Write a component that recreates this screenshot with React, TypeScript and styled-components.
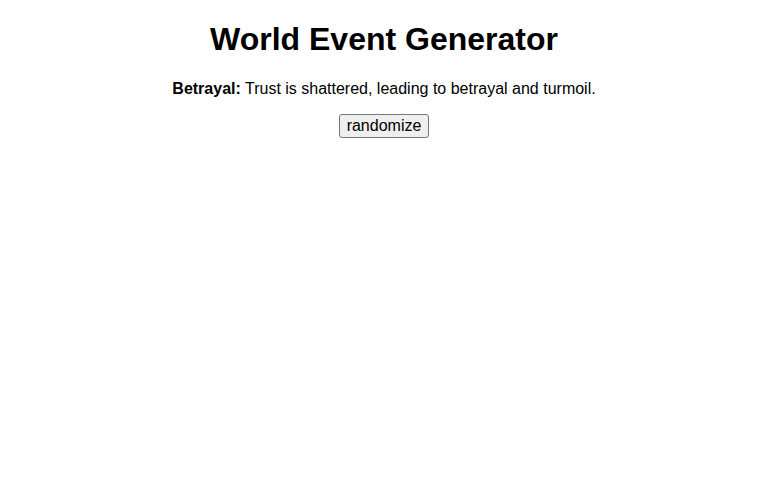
import React, { useState } from 'react'
import styled, { createGlobalStyle } from 'styled-components'

const GlobalStyle = createGlobalStyle`
  body {
    margin: 0;
    background: #fff;
    color: #000;
    font-family: "Liberation Sans", Arial, sans-serif;
  }
`

const Page = styled.div`
  text-align: center;
`

const Title = styled.h1`
  font-size: 32px;
  font-weight: bold;
  margin: 21.44px 0;
`

const EventLine = styled.p`
  font-size: 16px;
  margin: 16px 0;
`

const RandomButton = styled.button`
  font: inherit;
  font-size: 16px;
  color: #000;
  background: #efefef;
  border: 1px solid #767676;
  border-radius: 3px;
  padding: 2px 7px;
  cursor: pointer;

  &:hover {
    background: #e5e5e5;
  }
`

const events = [
  { name: 'Betrayal', text: 'Trust is shattered, leading to betrayal and turmoil.' },
  { name: 'Plague', text: 'A deadly sickness spreads from town to town.' },
  { name: 'Festival', text: 'The realm gathers to celebrate a bountiful harvest.' },
  { name: 'War', text: 'Neighbouring kingdoms clash over disputed borders.' },
]

export default function App() {
  const [index, setIndex] = useState(0)
  const event = events[index]

  const randomize = () => {
    setIndex(Math.floor(Math.random() * events.length))
  }

  return (
    <Page>
      <GlobalStyle />
      <Title>World Event Generator</Title>
      <EventLine>
        <strong>{event.name}:</strong> {event.text}
      </EventLine>
      <RandomButton onClick={randomize}>randomize</RandomButton>
    </Page>
  )
}
